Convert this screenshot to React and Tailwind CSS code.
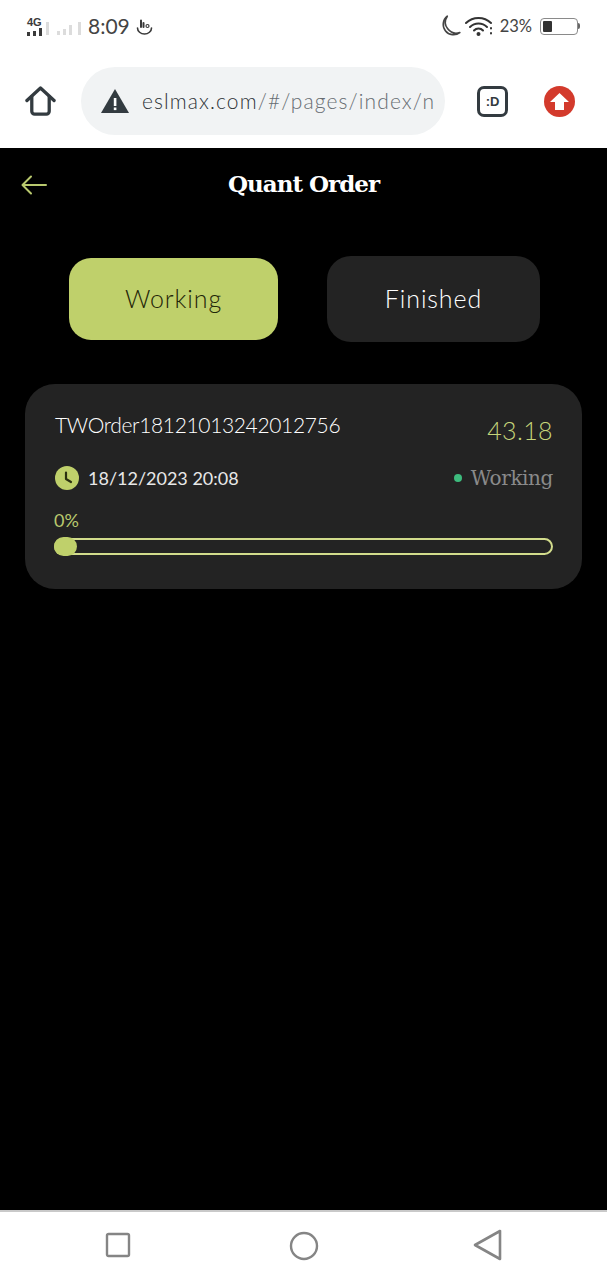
const geo = { fontFamily: 'Lato, "Open Sans", sans-serif' };
const serif = { fontFamily: '"DejaVu Serif", serif' };

function StatusBar() {
  return (
    <div className="h-[48px] flex items-start justify-between pt-[15px] pl-[27px] pr-[27px] bg-white text-[#3a3a3a]">
      <div className="flex items-center h-[22px]">
        <div className="w-[18px] flex flex-col items-start mr-[1px]">
          <span className="text-[11px] leading-[10px] font-bold" style={{ fontFamily: '"Liberation Sans", sans-serif' }}>4G</span>
          <svg width="18" height="9" viewBox="0 0 18 9" fill="#3a3a3a">
            <rect x="0" y="5" width="3" height="4" />
            <rect x="6" y="4" width="3" height="5" />
            <rect x="12" y="1" width="3" height="8" />
          </svg>
        </div>
        <svg width="36" height="14" viewBox="0 0 36 14" fill="#dcdcdc" className="mt-[5px]">
          <rect x="0" y="0" width="3" height="13" />
          <rect x="11" y="9" width="3" height="4" />
          <rect x="17" y="7" width="3" height="6" />
          <rect x="23" y="3" width="3" height="10" />
          <rect x="32" y="0" width="3" height="13" />
        </svg>
        <span className="ml-[6px] text-[21px] leading-[22px] text-[#444]" style={geo}>8:09</span>
        <svg width="17" height="17" viewBox="0 0 17 17" fill="none" stroke="#3a3a3a" strokeWidth="1.6" className="ml-[6px]" strokeLinecap="round">
          <path d="M1.5 10 a7 6 0 0 0 14 0" />
          <path d="M5 9V2.5M7.5 9V5" strokeWidth="2" />
          <circle cx="11.5" cy="8" r="1.5" strokeWidth="1.2" />
        </svg>
      </div>
      <div className="flex items-center h-[22px]">
        <svg width="24" height="24" viewBox="0 0 22 22" fill="none" stroke="#444" strokeWidth="1.5" strokeLinejoin="round">
          <path d="M8.5 2 A9 9 0 1 0 20 17 A10 10 0 0 1 8.5 2Z" />
        </svg>
        <svg width="29" height="20" viewBox="0 0 29 20" fill="none" stroke="#333" strokeWidth="2" className="ml-[3px]" strokeLinecap="round">
          <path d="M1 7 a18 18 0 0 1 25 0" />
          <path d="M5 11 a12 12 0 0 1 17 0" />
          <path d="M9 14.5 a6 6 0 0 1 9 0" />
          <circle cx="13.5" cy="18" r="1" fill="#333" />
          <path d="M26 12v.5M26 17v.5" />
        </svg>
        <span className="ml-[6px] text-[16.5px] leading-[22px] text-[#444]" style={geo}>23%</span>
        <div className="ml-[8px] flex items-center">
          <div className="w-[38px] h-[17px] rounded-[4px] border border-[#8a8a8a] p-[2px]">
            <div className="w-[9px] h-full bg-[#333] rounded-[1px]" />
          </div>
          <div className="w-[2px] h-[6px] bg-[#666] rounded-r" />
        </div>
      </div>
    </div>
  );
}

function AddressBar() {
  return (
    <div className="h-[100px] bg-white flex items-start pl-[25px]">
      <svg width="31" height="31" viewBox="0 0 32 32" fill="none" stroke="#333b40" strokeWidth="3.4" strokeLinejoin="round" strokeLinecap="round" className="mt-[38px] shrink-0">
        <path d="M2 15 L16 2 L30 15" />
        <path d="M7 11 V26 a3 3 0 0 0 3 3 H22 a3 3 0 0 0 3 -3 V11" />
      </svg>
      <div className="mt-[19px] ml-[25px] w-[364px] h-[68px] rounded-[34px] bg-[#f1f3f4] flex items-center pl-[20px] overflow-hidden shrink-0">
        <svg width="28" height="25" viewBox="0 0 28 25" className="shrink-0">
          <path d="M14 0 L28 24 H0 Z" fill="#333b40" />
          <rect x="12.8" y="9" width="2.6" height="8" fill="#fff" />
          <rect x="12.8" y="18.5" width="2.6" height="2.6" fill="#fff" />
        </svg>
        <span className="ml-[13px] text-[21px] leading-[24px] whitespace-nowrap tracking-[1.1px] font-light" style={geo}>
          <span className="text-[#2f3438]">eslmax.com</span><span className="text-[#666c71]">/#/pages/index/n</span>
        </span>
      </div>
      <div className="mt-[38px] ml-[32px] w-[31px] h-[31px] rounded-[7px] border-[3px] border-[#333b40] flex items-center justify-center shrink-0">
        <span className="text-[13px] font-bold text-[#333b40]" style={{ fontFamily: '"Liberation Sans", sans-serif' }}>:D</span>
      </div>
      <div className="mt-[38px] ml-[36px] w-[31px] h-[31px] rounded-full bg-[#d33a2c] flex items-center justify-center shrink-0">
        <svg width="19" height="17" viewBox="0 0 19 17" fill="#fff"><path d="M9.5 0 L19 9 H14 V17 H5 V9 H0 Z" /></svg>
      </div>
    </div>
  );
}

function NavBar() {
  return (
    <div className="h-[70px] bg-white border-t-2 border-[#c9c9c9] flex items-start">
      <svg className="ml-[105px] mt-[20px] shrink-0" width="26" height="26" viewBox="0 0 26 26" fill="none" stroke="#858585" strokeWidth="2.4"><rect x="2" y="2" width="22" height="22" rx="1.5" /></svg>
      <svg className="ml-[158px] mt-[19px] shrink-0" width="30" height="30" viewBox="0 0 30 30" fill="none" stroke="#858585" strokeWidth="2.4"><circle cx="15" cy="15" r="13" /></svg>
      <svg className="ml-[154px] mt-[17px] shrink-0" width="29" height="32" viewBox="0 0 29 32" fill="none" stroke="#858585" strokeWidth="2.6" strokeLinejoin="round"><path d="M2 16 L27 2 V30 Z" /></svg>
    </div>
  );
}

export default function App() {
  return (
    <div className="w-[607px] h-[1280px] flex flex-col overflow-hidden bg-black">
      <StatusBar />
      <AddressBar />
      <main className="flex-1 bg-black">
        <header className="h-[72px] flex items-center relative pl-[21px]">
          <svg width="26" height="20" viewBox="0 0 26 20" fill="none" stroke="#b9c96e" strokeWidth="2" strokeLinecap="round" strokeLinejoin="round" className="mt-[1px]">
            <path d="M25 10 H2 M10 1.5 L1.5 10 L10 18.5" />
          </svg>
          <h1 className="absolute inset-x-0 text-center text-[23px] leading-[28px] font-bold text-white tracking-[-1px]" style={serif}>Quant Order</h1>
        </header>
        <div className="flex items-center pl-[69px] mt-[36px]">
          <button className="w-[209px] h-[82px] rounded-[22px] bg-[#bfd06b] text-[#1f2608] text-[25px] font-light tracking-[0.9px]" style={geo}>Working</button>
          <button className="ml-[49px] w-[213px] h-[86px] rounded-[24px] bg-[#232323] text-white text-[25px] font-light tracking-[0.9px]" style={geo}>Finished</button>
        </div>
        <section className="mt-[42px] mx-[25px] w-[557px] h-[205px] rounded-[30px] bg-[#232323] pt-[26px] pl-[30px] pr-[29px] flex flex-col">
          <div className="flex justify-between items-start h-[32px]">
            <span className="text-[21px] leading-[30px] font-light text-white tracking-[-0.35px]" style={geo}>TWOrder18121013242012756</span>
            <span className="text-[25px] leading-[40px] font-light text-[#c6d67a] tracking-[0.4px]" style={geo}>43.18</span>
          </div>
          <div className="flex justify-between items-center mt-[24px] h-[24px]">
            <div className="flex items-center">
              <svg width="24" height="24" viewBox="0 0 24 24">
                <circle cx="12" cy="12" r="12" fill="#bfd06b" />
                <path d="M11 6.5 V13 L16 16" fill="none" stroke="#2a3010" strokeWidth="2.2" strokeLinecap="round" strokeLinejoin="round" />
              </svg>
              <span className="ml-[9px] text-[18px] leading-[24px] text-[#e8e8e8]" style={geo}>18/12/2023 20:08</span>
            </div>
            <div className="flex items-center">
              <span className="w-[8px] h-[8px] rounded-full bg-[#3dbb7d]" />
              <span className="ml-[9px] text-[20px] leading-[24px] text-[#8a8a8a] tracking-[-0.4px]" style={serif}>Working</span>
            </div>
          </div>
          <span className="mt-[21px] -ml-[1px] text-[18px] leading-[18px] text-[#b9c96e]" style={geo}>0%</span>
          <div className="mt-[9px] -ml-[1px] h-[17px] rounded-full border-2 border-[#d2dc8c] relative">
            <div className="absolute left-[-2px] top-[-3px] w-[23px] h-[19px] rounded-full bg-[#bfd06b]" />
          </div>
        </section>
      </main>
      <NavBar />
    </div>
  );
}
